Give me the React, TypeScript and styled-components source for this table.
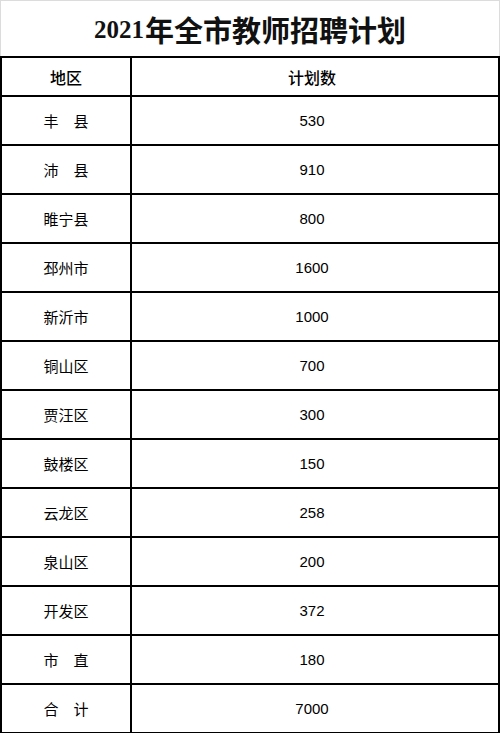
import React from 'react';
import styled, { createGlobalStyle } from 'styled-components';

const GlobalStyle = createGlobalStyle`
  html, body {
    margin: 0;
    padding: 0;
    background: #ffffff;
  }
  body {
    font-family: "Liberation Sans", "Noto Sans CJK SC", sans-serif;
    color: #000000;
  }
`;

const Sheet = styled.div`
  width: 500px;
  display: flex;
  flex-direction: column;
`;

const TitleRow = styled.div`
  box-sizing: border-box;
  height: 56px;
  border: 1px solid #dcdcdc;
  border-bottom: none;
  display: flex;
  align-items: center;
  justify-content: center;
  font-family: "Noto Sans CJK SC", sans-serif;
  font-weight: 700;
  font-size: 29px;
  color: #111111;
  line-height: 1;
  padding-top: 2px;
`;

const Year = styled.span`
  font-family: "Liberation Serif", serif;
  font-weight: 700;
  font-size: 25px;
  margin-right: 1px;
`;

const Grid = styled.div`
  display: grid;
  grid-template-columns: 130px 1fr;
  border-top: 2px solid #000000;
  border-left: 2px solid #000000;
`;

const Cell = styled.div<{ $head?: boolean; $num?: boolean }>`
  box-sizing: border-box;
  height: ${(p) => (p.$head ? '39px' : '49px')};
  border-right: 2px solid #000000;
  border-bottom: 2px solid #000000;
  display: flex;
  align-items: center;
  justify-content: center;
  padding-right: ${(p) => (p.$num ? '6px' : '0')};
  font-size: ${(p) => (p.$head ? '16px' : '15px')};
  font-weight: ${(p) => (p.$head ? 500 : 400)};
  white-space: pre;
`;

const rows: [string, number][] = [
  ['丰　县', 530],
  ['沛　县', 910],
  ['睢宁县', 800],
  ['邳州市', 1600],
  ['新沂市', 1000],
  ['铜山区', 700],
  ['贾汪区', 300],
  ['鼓楼区', 150],
  ['云龙区', 258],
  ['泉山区', 200],
  ['开发区', 372],
  ['市　直', 180],
  ['合　计', 7000],
];

export default function App() {
  return (
    <>
      <GlobalStyle />
      <Sheet>
        <TitleRow>
          <Year>2021</Year>年全市教师招聘计划
        </TitleRow>
        <Grid>
          <Cell $head>地区</Cell>
          <Cell $head $num>计划数</Cell>
          {rows.map(([area, count]) => (
            <React.Fragment key={area}>
              <Cell>{area}</Cell>
              <Cell $num>{count}</Cell>
            </React.Fragment>
          ))}
        </Grid>
      </Sheet>
    </>
  );
}
